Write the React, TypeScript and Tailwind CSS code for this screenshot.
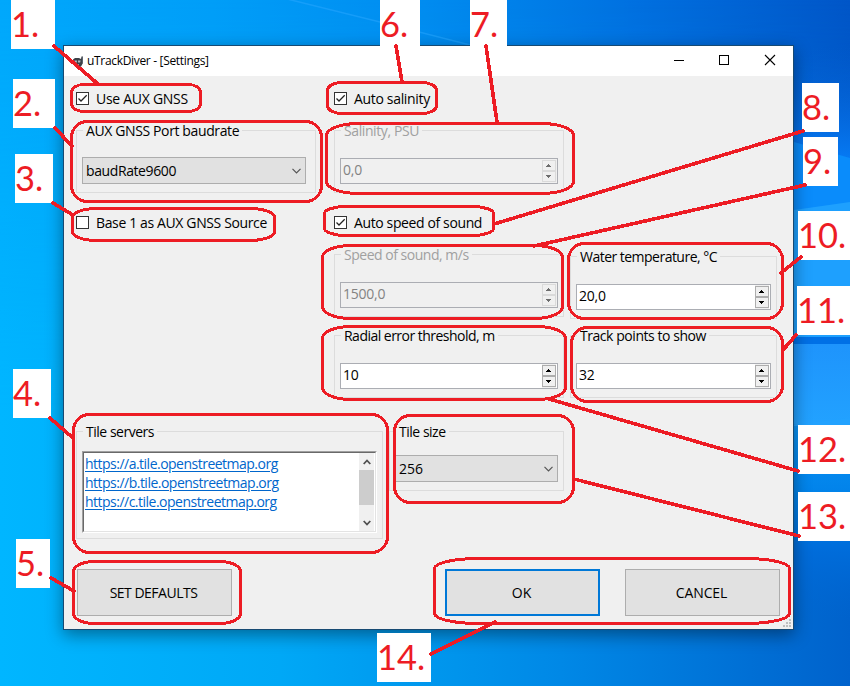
import React from "react";

const ui = "font-['Open_Sans','Noto_Sans',sans-serif]";

function Check({ label, checked, className = "", text = "" }: { label: string; checked?: boolean; className?: string; text?: string }) {
  return (
    <div className={`flex h-[13px] items-center gap-[7px] ${className}`}>
      <span className="size-[13px] shrink-0 border border-[#333] bg-white">
        {checked && (
          <svg width="11" height="11" viewBox="0 0 11 11" className="block">
            <path d="M1.5 5.5 4 8 9.7 2.3" fill="none" stroke="#222" strokeWidth="1.25" />
          </svg>
        )}
      </span>
      <span className={`whitespace-nowrap leading-[18px] ${text}`}>{label}</span>
    </div>
  );
}

function Group({ title, className = "", text = "tracking-[-0.48px]", disabled, children }: { title: string; className?: string; text?: string; disabled?: boolean; children?: React.ReactNode }) {
  return (
    <section className={`shrink-0 border border-[#dcdcdc] pl-[5px] pr-[5px] ${className}`}>
      <div className="-mt-[9px] flex h-[18px]">
        <span className={`ml-px whitespace-nowrap bg-[#f0f0f0] px-[3px] leading-[18px] ${disabled ? "text-[#a0a0a0]" : ""} ${text}`}>{title}</span>
      </div>
      {children}
    </section>
  );
}

function Combo({ value, className = "", text = "" }: { value: string; className?: string; text?: string }) {
  return (
    <div className={`flex h-[27px] items-center justify-between border border-[#adadad] bg-[#e1e1e1] pl-[3px] pr-1 ${className}`}>
      <span className={text}>{value}</span>
      <svg width="9" height="6" viewBox="0 0 9 6">
        <path d="M.5.8 4.5 4.8 8.5.8" fill="none" stroke="#555" strokeWidth="1.2" />
      </svg>
    </div>
  );
}

function Spinner({ value, disabled, className = "" }: { value: string; disabled?: boolean; className?: string }) {
  const step = `flex h-[11px] w-[14px] items-center pl-[3px] border bg-[#f0f0f0] ${disabled ? "border-[#dadada]" : "border-[#adadad]"}`;
  const ink = disabled ? "#6d6d6d" : "#000";
  return (
    <div className={`flex h-[26px] justify-between border border-[#abadb3] pl-[2px] pr-px ${disabled ? "bg-[#f0f0f0] text-[#838383]" : "bg-white"} ${className}`}>
      <span className="leading-[21px] tracking-[-0.25px]">{value}</span>
      <span className="flex flex-col bg-[#f0f0f0] pt-px">
        <span className={step}>
          <svg width="5" height="3" viewBox="0 0 5 3" shapeRendering="crispEdges"><path d="M2 0h1v1h1v1h1v1H0V2h1V1h1z" fill={ink} /></svg>
        </span>
        <span className={step}>
          <svg width="5" height="3" viewBox="0 0 5 3" shapeRendering="crispEdges"><path d="M0 0h5v1H4v1H3v1H2V2H1V1H0z" fill={ink} /></svg>
        </span>
      </span>
    </div>
  );
}

function Backdrop() {
  return (
    <svg className="absolute inset-0" width="850" height="686">
      <defs>
        <linearGradient id="sky" x1="0" y1="0" x2="1" y2="0">
          <stop offset="0" stopColor="#00a8fc" />
          <stop offset=".25" stopColor="#009ef8" />
          <stop offset=".5" stopColor="#008cf0" />
          <stop offset=".75" stopColor="#0070e0" />
          <stop offset="1" stopColor="#0056c8" />
        </linearGradient>
        <linearGradient id="floor" x1="0" y1="0" x2="1" y2="0">
          <stop offset="0" stopColor="#00b6ff" />
          <stop offset=".33" stopColor="#00a8f6" />
          <stop offset=".66" stopColor="#0088e6" />
          <stop offset="1" stopColor="#0062cc" />
        </linearGradient>
        <linearGradient id="fade" x1="0" y1="0" x2="0" y2="1">
          <stop offset="0" stopColor="#fff" stopOpacity="0" />
          <stop offset=".6" stopColor="#fff" />
        </linearGradient>
        <mask id="low"><rect width="850" height="686" fill="url(#fade)" /></mask>
        <linearGradient id="upper" gradientUnits="userSpaceOnUse" x1="0" y1="46" x2="0" y2="160">
          <stop offset="0" stopColor="#0560d4" stopOpacity="0" />
          <stop offset="1" stopColor="#067af4" />
        </linearGradient>
        <linearGradient id="beam" gradientUnits="userSpaceOnUse" x1="0" y1="344" x2="0" y2="426">
          <stop offset="0" stopColor="#1e94fc" />
          <stop offset="1" stopColor="#22a2ff" />
        </linearGradient>
        <linearGradient id="lower" gradientUnits="userSpaceOnUse" x1="0" y1="424" x2="0" y2="620">
          <stop offset="0" stopColor="#0a94f6" />
          <stop offset=".4" stopColor="#0080e8" />
          <stop offset=".65" stopColor="#006cda" />
          <stop offset="1" stopColor="#0066d2" stopOpacity="0" />
        </linearGradient>
      </defs>
      <rect width="850" height="686" fill="url(#sky)" />
      <rect width="850" height="686" fill="url(#floor)" mask="url(#low)" />
      <path d="M780 46h70v124h-70z" fill="url(#upper)" />
      <path d="M780 138 850 158v60h-70z" fill="#0a8cfb" />
      <path d="M780 212 850 202v136h-70z" fill="#1ea0fe" />
      <path d="M780 337h70v7h-70z" fill="#0070e6" />
      <path d="M780 344h70v86h-70z" fill="url(#beam)" />
      <path d="M780 424h70v196h-70z" fill="url(#lower)" />
      <path d="M780 426 850 418v8z" fill="#22a2ff" />
      <path d="M283-2 380 22 470 45" fill="none" stroke="#2aa8ff" strokeOpacity=".5" strokeWidth="1.5" />
    </svg>
  );
}

const labels: [string, string][] = [
  ["1.", "left-[11px] top-0 w-[44px] h-[49px]"],
  ["2.", "left-[13px] top-[79px] w-[42px] h-[49px]"],
  ["3.", "left-[15px] top-[154px] w-[38px] h-[49px]"],
  ["4.", "left-[13px] top-[369px] w-[38px] h-[49px]"],
  ["5.", "left-[16px] top-[539px] w-[34px] h-[49px]"],
  ["6.", "left-[380px] top-0 w-[40px] h-[49px]"],
  ["7.", "left-[470px] top-0 w-[37px] h-[49px]"],
  ["8.", "left-[802px] top-[83px] w-[37px] h-[49px]"],
  ["9.", "left-[803px] top-[137px] w-[35px] h-[49px]"],
  ["10.", "left-[798px] top-[211px] w-[52px] h-[49px]"],
  ["11.", "left-[797px] top-[286px] w-[53px] h-[49px]"],
  ["12.", "left-[798px] top-[425px] w-[52px] h-[49px]"],
  ["13.", "left-[798px] top-[492px] w-[52px] h-[49px]"],
  ["14.", "left-[377px] top-[633px] w-[54px] h-[49px]"],
];

// [left, top, right, bottom, rx, ry] of every outlined region
const outlines = [
  [72, 85, 201, 112, 12, 8],
  [72, 122, 322, 202, 16, 16],
  [73, 209, 275, 241, 24, 9],
  [74, 415, 388, 553, 16, 16],
  [74, 562, 241, 624, 21, 10],
  [328, 83, 437, 114, 14, 8],
  [327, 124, 574, 194, 32, 12],
  [325, 207, 494, 236, 22, 7],
  [323, 246, 563, 319, 28, 12],
  [323, 327, 566, 400, 28, 12],
  [569, 244, 783, 319, 16, 16],
  [572, 328, 783, 402, 16, 16],
  [395, 416, 574, 503, 16, 16],
  [435, 559, 790, 624, 44, 10],
];

const leaders = [
  [54, 46, 98, 84],
  [55, 128, 72, 146],
  [53, 203, 73, 215],
  [50, 418, 73, 438],
  [51, 578, 74, 591],
  [396, 46, 402, 82],
  [486, 46, 497, 122],
  [803, 131, 494, 224],
  [805, 185, 534, 246],
  [801, 257, 781, 273],
  [796, 335, 783, 350],
  [798, 471, 549, 399],
  [799, 536, 574, 479],
  [431, 654, 495, 622],
];

export default function App() {
  return (
    <main className={`relative h-[686px] w-[850px] overflow-hidden text-[14px] text-black ${ui}`}>
      <Backdrop />
      <div className="absolute left-[63px] top-[45px] flex h-[585px] w-[731px] flex-col border border-[#174a73] bg-[#f0f0f0] shadow-[0_5px_16px_rgba(0,0,0,0.4)]">
        <header className="flex h-[30px] shrink-0 items-center bg-white pl-[8px]">
          <svg width="12" height="12" viewBox="0 0 12 12" className="mt-px">
            <path d="M1 3.5 3 2h4l2 1 .5-2.5h1.5V7L9 10.5 6 12l-3-1.5L1 7z" fill="#3c4148" />
            <path d="M2.4 4.5h2.5v2H2.8zM6 4.5h2.6l-.5 2H6z" fill="#aeb9c4" />
            <path d="M4 8.5h3" stroke="#92979d" />
            <path d="M10.5 1v6" stroke="#59626d" />
          </svg>
          <span className="ml-[3px] flex-1 text-[12px] tracking-[-0.32px]">uTrackDiver - [Settings]</span>
          <svg width="105" height="14" viewBox="0 0 105 14" className="mb-[2px] mr-[15px]" fill="none" stroke="#000" shapeRendering="crispEdges">
            <path d="M1 7.5h10" />
            <path d="M46.500 2.500h9v9h-9z" />
            <path d="m92 2 10 10m0-10-10 10" shapeRendering="auto" strokeWidth="1.1" />
          </svg>
        </header>

        <div className="flex h-[355px] shrink-0 pl-[12px]">
          <div className="mr-[18px] w-[240px] pt-[16px]">
            <Check label="Use AUX GNSS" checked text="tracking-[-0.28px]" />
            <Group title="AUX GNSS Port baudrate" className="mt-[25px] h-[63px]" text="tracking-[-0.38px]">
              <Combo value="baudRate9600" className="mr-[4px] mt-[17px]" text="tracking-[-0.4px]" />
            </Group>
            <Check label="Base 1 as AUX GNSS Source" className="mt-[23px]" text="tracking-[-0.37px]" />
          </div>
          <div className="mr-[6px] w-[230px] pt-[16px]">
            <Check label="Auto salinity" checked text="tracking-[-0.33px]" />
            <Group title="Salinity, PSU" disabled className="mt-[25px] h-[63px]" text="tracking-[-0.4px]">
              <Spinner value="0,0" disabled className="mt-[18px]" />
            </Group>
            <Check label="Auto speed of sound" checked className="mt-[23px]" text="tracking-[-0.38px]" />
            <Group title="Speed of sound, m/s" disabled className="mt-[25px] h-[63px]">
              <Spinner value="1500,0" disabled className="mt-[18px]" />
            </Group>
            <Group title="Radial error threshold, m" className="mt-[18px] h-[63px]" text="tracking-[-0.52px]">
              <Spinner value="10" className="mt-[18px]" />
            </Group>
          </div>
          <div className="w-[207px] pt-[180px]">
            <Group title="Water temperature, °C" className="h-[63px]" text="tracking-[-0.52px]">
              <Spinner value="20,0" className="mt-[18px]" />
            </Group>
            <Group title="Track points to show" className="mt-[16px] h-[63px]" text="tracking-[-0.45px]">
              <Spinner value="32" className="mt-[18px]" />
            </Group>
          </div>
        </div>

        <div className="flex h-[108px] shrink-0 items-start gap-[6px] pl-[12px]">
          <Group title="Tile servers" className="h-[108px] w-[307px]">
            <div className="mt-[10px] flex h-[82px] w-[295px] border border-b-white border-l-[#a0a0a0] border-r-white border-t-[#a0a0a0]">
              <div className="flex flex-1 justify-between border border-b-[#e3e3e3] border-l-[#696969] border-r-[#e3e3e3] border-t-[#696969] bg-white pl-px">
                <div className="pt-px leading-[19px] tracking-[-0.51px] text-[#0066cc] underline underline-offset-2">
                  <div>https://a.tile.openstreetmap.org</div>
                  <div>https://b.tile.openstreetmap.org</div>
                  <div>https://c.tile.openstreetmap.org</div>
                </div>
                <div className="mr-px flex w-[15px] flex-col items-center justify-between bg-[#f0f0f0] pb-[5px] pt-[6px]">
                  <svg width="8" height="6" viewBox="0 0 8 6"><path d="M.7 5 4 1.500 7.300 5" fill="none" stroke="#505050" strokeWidth="1.8" /></svg>
                  <div className="mb-[10px] h-[35px] w-full bg-[#cdcdcd]" />
                  <svg width="8" height="6" viewBox="0 0 8 6"><path d="M.7 1 4 4.500 7.300 1" fill="none" stroke="#505050" strokeWidth="1.8" /></svg>
                </div>
              </div>
            </div>
          </Group>
          <Group title="Tile size" className="h-[60px] w-[175px]">
            <Combo value="256" className="mt-[14px]" />
          </Group>
        </div>

        <div className="mt-[30px] flex h-[47px] shrink-0 pl-[13px]">
          <button className="w-[155px] border border-[#adadad] bg-[#e1e1e1] pr-[2px] tracking-[-0.5px]">SET DEFAULTS</button>
          <button className="ml-[213px] w-[155px] border-2 border-[#0078d7] bg-[#e1e1e1] pr-[2px]">OK</button>
          <button className="ml-[25px] w-[155px] border border-[#adadad] bg-[#e1e1e1] pr-[2px] tracking-[-0.1px]">CANCEL</button>
        </div>
        <svg className="absolute bottom-[2px] right-[2px]" width="8" height="8" fill="#bfbfbf">
          <path d="M6 0h2v2H6zM3 3h2v2H3zM6 3h2v2H6zM0 6h2v2H0zM3 6h2v2H3zM6 6h2v2H6z" />
        </svg>
      </div>

      {labels.map(([n, box]) => (
        <div key={n} className={`absolute flex items-center bg-white font-['Lato',sans-serif] text-[34.5px] leading-none text-[#ed1c24] ${box}`}>
          {n}
        </div>
      ))}
      <svg className="absolute inset-0" width="850" height="686" fill="none" stroke="#ed1c24" strokeLinecap="round" shapeRendering="crispEdges">
        {outlines.map(([l, t, r, b, rx, ry]) => (
          <rect key={`${l}-${t}`} x={l - 0.5} y={t - 0.5} width={r - l} height={b - t} rx={rx} ry={ry} strokeWidth="3" />
        ))}
        {leaders.map(([x1, y1, x2, y2]) => (
          <line key={`${x1}-${y1}`} x1={x1} y1={y1} x2={x2} y2={y2} strokeWidth="3.6" />
        ))}
      </svg>
    </main>
  );
}
